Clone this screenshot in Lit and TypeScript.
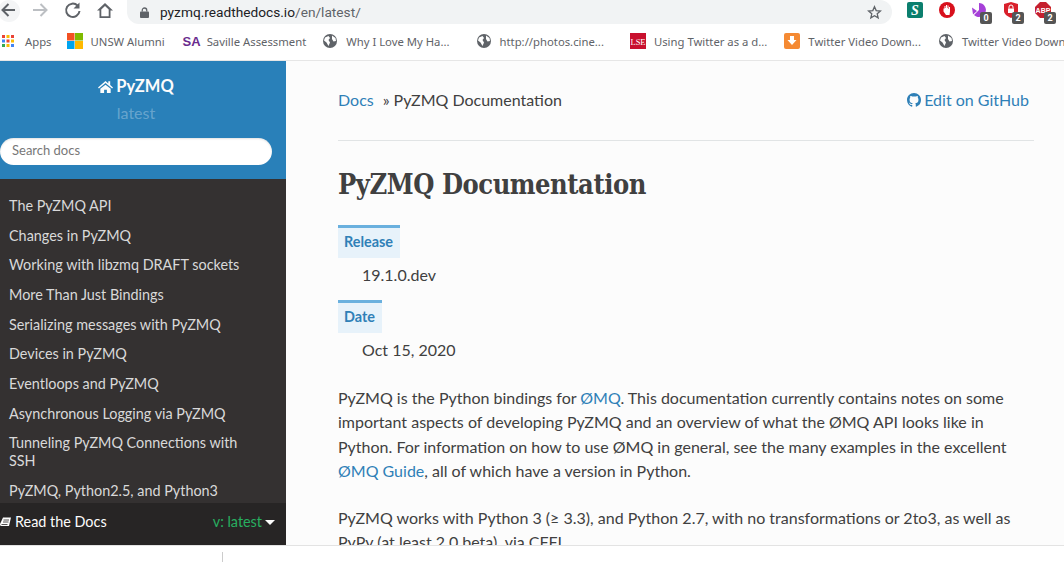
import { LitElement, html, css, svg } from 'lit';
import { customElement } from 'lit/decorators.js';

const NAV = [
  'The PyZMQ API',
  'Changes in PyZMQ',
  'Working with libzmq DRAFT sockets',
  'More Than Just Bindings',
  'Serializing messages with PyZMQ',
  'Devices in PyZMQ',
  'Eventloops and PyZMQ',
  'Asynchronous Logging via PyZMQ',
  'Tunneling PyZMQ Connections with SSH',
  'PyZMQ, Python2.5, and Python3',
];

const globe = svg`<svg class="ico" viewBox="0 0 16 16"><circle cx="8" cy="8" r="7" fill="#5f6368"/><path d="M3 4.500 6.500 3 8 5 6.500 7 8 9.500 6.500 13 4.500 9.500 2 7.500ZM10 2.500 13.500 5 14 8 11.500 8.500 10 6Z" fill="#fff"/></svg>`;

const APPS = ['#ea4335', '#fbbc05', '#ea4335', '#4285f4', '#ea4335', '#fbbc05', '#34a853', '#fbbc05', '#4285f4'];

@customElement('app-root')
export class AppRoot extends LitElement {
  static styles = css`
    :host {
      display: block;
      width: 1064px;
      height: 562px;
      overflow: hidden;
      background: #fff;
      font-family: 'Lato', 'Liberation Sans', sans-serif;
      color: #404040;
    }
    .toolbar {
      height: 24px;
      display: flex;
      align-items: flex-start;
      background: #fff;
    }
    .nav-btn {
      width: 22px;
      height: 22px;
      margin-right: 10px;
      flex: none;
    }
    .nav-btn:first-child {
      margin-left: -2px;
      background: #f4f5f6;
      border-radius: 50%;
    }
    .omnibox {
      margin-left: 1px;
      width: 765px;
      height: 24px;
      flex: none;
      background: #f1f3f4;
      border-radius: 0 12px 12px 12px;
      display: flex;
      align-items: center;
      padding-left: 13px;
      box-sizing: border-box;
      font-family: 'Roboto', sans-serif;
      font-size: 13.7px;
    }
    .lock { width: 9px; height: 11px; margin-right: 11px; }
    .host { color: #202124; }
    .path { color: #5f6368; }
    .star { margin-left: auto; margin-right: 10px; width: 15px; height: 15px; }
    .exts {
      display: flex;
      margin-left: 15px;
      margin-top: 2px;
      gap: 16px;
    }
    .ext { position: relative; width: 16px; height: 16px; flex: none; }
    .ext svg { display: block; width: 16px; height: 16px; }
    .badge {
      position: absolute;
      right: -5px;
      bottom: -6px;
      width: 12px;
      height: 12px;
      background: #555;
      border-radius: 2px;
      color: #fff;
      font: bold 9px/12px 'Roboto', sans-serif;
      text-align: center;
    }
    .bookmarks {
      height: 37px;
      padding-bottom: 2px;
      box-sizing: border-box;
      display: flex;
      align-items: center;
      font-family: 'Noto Sans', sans-serif;
      font-size: 11.3px;
      color: #5f6368;
      white-space: nowrap;
      overflow: hidden;
      border-bottom: 1px solid #e6e6e6;
    }
    .bm { display: flex; align-items: center; gap: 8px; flex: none; }
    .bm.tight { gap: 6px; }
    .ico { width: 16px; height: 16px; flex: none; display: block; }
    .sa { font: bold 13px 'Liberation Sans', sans-serif; color: #6a2c8e; }
    .main { display: flex; height: 484px; border-bottom: 1px solid #e3e3e3; }
    .side {
      width: 286px;
      flex: none;
      display: flex;
      flex-direction: column;
      background: #343131;
    }
    .side-top {
      height: 118px;
      background: #2980b9;
      box-sizing: border-box;
      padding: 15px 14px 0 0;
      text-align: center;
    }
    .brand {
      color: #fcfcfc;
      font-weight: 700;
      font-size: 16.5px;
      line-height: 21px;
      display: flex;
      justify-content: center;
      align-items: center;
      gap: 3px;
    }
    .brand svg { width: 15px; height: 15px; }
    .version {
      color: rgba(255, 255, 255, 0.3);
      font-size: 16px;
      line-height: 20px;
      margin-top: 6px;
    }
    .search {
      width: 272px;
      height: 27px;
      margin-top: 15px;
      box-sizing: border-box;
      background: #fff;
      border-radius: 14px;
      padding-left: 12px;
      text-align: left;
      font-size: 13px;
      line-height: 25px;
      color: #777;
      box-shadow: inset 0 1px 2px rgba(0, 0, 0, 0.12);
    }
    .nav {
      flex: 1;
      min-height: 0;
      overflow: hidden;
      padding-top: 12px;
    }
    .nav a {
      display: block;
      padding: 5.85px 40px 5.85px 9px;
      font-size: 14.4px;
      line-height: 18px;
      color: #d9d9d9;
    }
    .foot {
      height: 42px;
      flex: none;
      background: #272525;
      display: flex;
      align-items: center;
      padding: 0 11px 5px 0;
      box-sizing: border-box;
      font-size: 14.4px;
      color: #fcfcfc;
    }
    .foot svg { width: 11px; height: 12px; margin-right: 4px; }
    .ver { margin-left: auto; color: #27ae60; }
    .caret {
      display: inline-block;
      margin-left: 3px;
      vertical-align: 2px;
      border: 5px solid transparent;
      border-top: 5px solid #fcfcfc;
      border-bottom: 0;
    }
    .content {
      flex: 1;
      min-width: 0;
      background: #fcfcfc;
      overflow: hidden;
      padding: 29px 30px 0 52px;
      font-size: 16px;
      line-height: 24px;
    }
    .crumbs { display: flex; align-items: center; height: 20px; }
    a.l { color: #2f80b7; }
    .crumbs .sep { margin: 0 4px 0 9px; }
    .edit { margin: 0 5px 0 auto; display: flex; align-items: center; gap: 3px; }
    .edit svg { width: 14px; height: 14px; }
    .rule { height: 1px; background: #e1e4e5; margin: 30px 0 0; }
    h1 {
      margin: 26px 0 0;
      font-family: 'DejaVu Serif', serif;
      font-stretch: condensed;
      font-weight: 700;
      font-size: 27px;
      line-height: 36px;
      letter-spacing: -0.45px;
      color: #404040;
    }
    .field { margin-top: 22px; height: 33px; }
    .value + .field { margin-top: 13px; }
    .tag {
      display: inline-block;
      vertical-align: top;
      background: #e7f2fa;
      border-top: 3px solid #6ab0de;
      color: #2f80b7;
      font-size: 14.4px;
      font-weight: 700;
      line-height: 28px;
      height: 30px;
      padding: 0 7px 0 6px;
    }
    .value { padding-left: 24px; margin-top: 5px; line-height: 24px; }
    p { margin: 0; }
    .intro { margin-top: 24px; line-height: 24.3px; }
    .second { margin-top: 23px; line-height: 24.3px; }
    .tick { width: 1px; height: 10px; margin: 6px 0 0 222px; background: #ccc; }
  `;

  render() {
    return html`
      <div class="toolbar">
        <svg class="nav-btn" viewBox="0 0 22 22"><path d="M17 10H5M10.500 4 4.500 10l6 6" fill="none" stroke="#5f6368" stroke-width="2"/></svg>
        <svg class="nav-btn" viewBox="0 0 22 22"><path d="M3 10h13M10.500 4l6 6-6 6" fill="none" stroke="#bcbfc3" stroke-width="2"/></svg>
        <svg class="nav-btn" viewBox="0 0 22 22"><path d="M15.500 5.500A6.700 6.700 0 1 0 17.500 11" fill="none" stroke="#5f6368" stroke-width="2"/><path d="M17.500 2.500v6h-6Z" fill="#5f6368"/></svg>
        <svg class="nav-btn" viewBox="0 0 22 22"><path d="M11 3 3 10.500h2.500V18h11v-7.500H19ZM7.300 16.300V9.400L11 5.900l3.700 3.500v6.900Z" fill="#5f6368" fill-rule="evenodd"/></svg>
        <div class="omnibox">
          <svg class="lock" viewBox="0 0 10 12"><path d="M2.500 5V3.500a2.500 2.500 0 0 1 5 0V5" fill="none" stroke="#5f6368" stroke-width="1.400"/><rect y="5" width="10" height="7" rx="1" fill="#5f6368"/></svg>
          <span class="host">pyzmq.readthedocs.io</span><span class="path">/en/latest/</span>
          <svg class="star" viewBox="0 0 16 16"><path d="M8 1.800 9.800 6l4.500.4-3.400 3 1 4.400L8 11.500 4.100 13.800l1-4.400-3.400-3L6.200 6Z" fill="none" stroke="#5f6368" stroke-width="1.400"/></svg>
        </div>
        <div class="exts">
          <div class="ext"><svg viewBox="0 0 16 16"><rect width="16" height="16" rx="2" fill="#0b7f6e"/><text x="8" y="13" text-anchor="middle" font-family="Liberation Serif" font-style="italic" font-weight="700" font-size="14" fill="#fff">S</text></svg></div>
          <div class="ext"><svg viewBox="0 0 16 16"><circle cx="8" cy="8" r="8" fill="#d8101c"/><path d="M4.500 6.500h1V4h1v2h.5V3h1v3h.5V3.500h1V7h.5V5h1v4.500L10.500 13H7L4.500 9.500Z" fill="#fff"/></svg></div>
          <div class="ext"><svg viewBox="0 0 16 16"><path d="M8 1a7 7 0 1 1-5 12l5-5Z" fill="#a640d8"/><path d="M1 5.500 6 9l-4 3.500Z" fill="#a640d8"/></svg><span class="badge">0</span></div>
          <div class="ext"><svg viewBox="0 0 16 16"><path d="M8 0 15 2v7c0 3-3 5-7 7-4-2-7-4-7-7V2Z" fill="#d9202b"/><path d="M6 6.500V5a2 2 0 0 1 4 0v1.500" fill="none" stroke="#fff"/><rect x="5" y="6.500" width="6" height="4.500" fill="#fff"/></svg><span class="badge">2</span></div>
          <div class="ext"><svg viewBox="0 0 16 16"><path d="M5 0h6l5 5v6l-5 5H5l-5-5V5Z" fill="#c5202f"/><text x="8" y="10.500" text-anchor="middle" font-family="Liberation Sans" font-weight="700" font-size="7" fill="#fff">ABP</text></svg><span class="badge">2</span></div>
        </div>
      </div>
      <div class="bookmarks">
        <div class="bm" style="margin-left:1px">
          <svg class="ico" viewBox="0 0 16 16">
            ${[2, 6.5, 11].flatMap((y, r) =>
              [1, 5.5, 10].map(
                (x, c) => svg`<rect x=${x} y=${y} width="3" height="3" fill=${APPS[r * 3 + c]} />`
              )
            )}
          </svg>
          <span>Apps</span>
        </div>
        <div class="bm" style="margin-left:15px">
          <svg class="ico" viewBox="0 0 16 16"><rect width="7.500" height="7.500" fill="#f25022"/><rect x="8" width="8" height="7.500" fill="#7fba00"/><rect y="8" width="7.500" height="8" fill="#00a4ef"/><rect x="8" y="8" width="8" height="8" fill="#ffb900"/></svg>
          <span>UNSW Alumni</span>
        </div>
        <div class="bm tight" style="margin-left:18px"><span class="sa">SA</span><span>Saville Assessment</span></div>
        <div class="bm" style="margin-left:16px">${globe}<span>Why I Love My Ha...</span></div>
        <div class="bm" style="margin-left:26px">${globe}<span>http://photos.cine...</span></div>
        <div class="bm" style="margin-left:26px">
          <svg class="ico" viewBox="0 0 16 16"><rect width="16" height="16" fill="#c8102e"/><text x="8" y="12" text-anchor="middle" font-family="Liberation Serif" font-size="8.500" fill="#fff">LSE</text></svg>
          <span>Using Twitter as a d...</span>
        </div>
        <div class="bm" style="margin-left:17px">
          <svg class="ico" viewBox="0 0 16 16"><rect width="16" height="16" rx="2" fill="#f58a33"/><path d="M6 3h4v4h2.500L8 12 3.500 7H6Z" fill="#fff"/></svg>
          <span>Twitter Video Down...</span>
        </div>
        <div class="bm" style="margin-left:17px">${globe}<span>Twitter Video Down</span></div>
      </div>
      <div class="main">
        <aside class="side">
          <div class="side-top">
            <div class="brand">
              <svg viewBox="0 0 16 16"><path d="M8 2 0 9l1 1.200L8 4.300l7 5.900L16 9l-3-2.600V2.500h-2v2.200Z M2.500 10.500 8 6l5.500 4.500V15H9.500v-3.500h-3V15h-4Z" fill="#fcfcfc"/></svg>
              <span>PyZMQ</span>
            </div>
            <div class="version">latest</div>
            <div class="search">Search docs</div>
          </div>
          <nav class="nav">${NAV.map((n) => html`<a>${n}</a>`)}</nav>
          <div class="foot">
            <svg viewBox="0 0 11 12"><path d="M3 1.500h8L9 10H1.500A1.500 1.500 0 0 1 0 8.500C0 8 .2 7.500.5 7Z" fill="#fcfcfc"/><path d="M3.500 4h5.500M3 6h5.500M1.500 8.500h6" stroke="#272525" stroke-width=".8"/></svg>
            <span>Read the Docs</span>
            <span class="ver">v: latest<span class="caret"></span></span>
          </div>
        </aside>
        <section class="content">
          <div class="crumbs">
            <a class="l">Docs</a><span class="sep">»</span><span>PyZMQ Documentation</span>
            <a class="l edit">
              <svg viewBox="0 0 16 16"><path fill="#2f80b7" d="M8 0C3.580 0 0 3.580 0 8c0 3.540 2.290 6.530 5.470 7.590.4.070.55-.17.550-.38 0-.19-.010-.82-.010-1.490-2.010.37-2.530-.49-2.690-.94-.090-.23-.48-.94-.82-1.130-.28-.15-.68-.52-.010-.53.630-.010 1.080.58 1.230.82.720 1.210 1.870.870 2.330.660.070-.52.280-.87.510-1.070-1.780-.2-3.640-.89-3.640-3.950 0-.87.310-1.590.820-2.150-.080-.2-.360-1.020.080-2.120 0 0 .67-.21 2.200.820.640-.18 1.320-.27 2-.27s1.360.090 2 .27c1.530-1.040 2.200-.82 2.200-.82.440 1.100.160 1.920.080 2.120.510.560.820 1.270.820 2.150 0 3.070-1.870 3.750-3.650 3.950.290.250.540.730.540 1.480 0 1.070-.010 1.930-.010 2.200 0 .21.150.46.550.38A8.010 8.010 0 0 0 16 8c0-4.420-3.580-8-8-8Z"/></svg>
              Edit on GitHub
            </a>
          </div>
          <div class="rule"></div>
          <h1>PyZMQ Documentation</h1>
          <div class="field"><span class="tag">Release</span></div>
          <div class="value">19.1.0.dev</div>
          <div class="field"><span class="tag">Date</span></div>
          <div class="value">Oct 15, 2020</div>
          <p class="intro">
            PyZMQ is the Python bindings for <a class="l">ØMQ</a>. This documentation currently contains notes on some
            important aspects of developing PyZMQ and an overview of what the ØMQ API looks like in
            Python. For information on how to use ØMQ in general, see the many examples in the excellent
            <a class="l">ØMQ Guide</a>, all of which have a version in Python.
          </p>
          <p class="second">
            PyZMQ works with Python 3 (≥ 3.3), and Python 2.7, with no transformations or 2to3, as well as
            PyPy (at least 2.0 beta), via CFFI.
          </p>
        </section>
      </div>
      <div class="tick"></div>
    `;
  }
}
